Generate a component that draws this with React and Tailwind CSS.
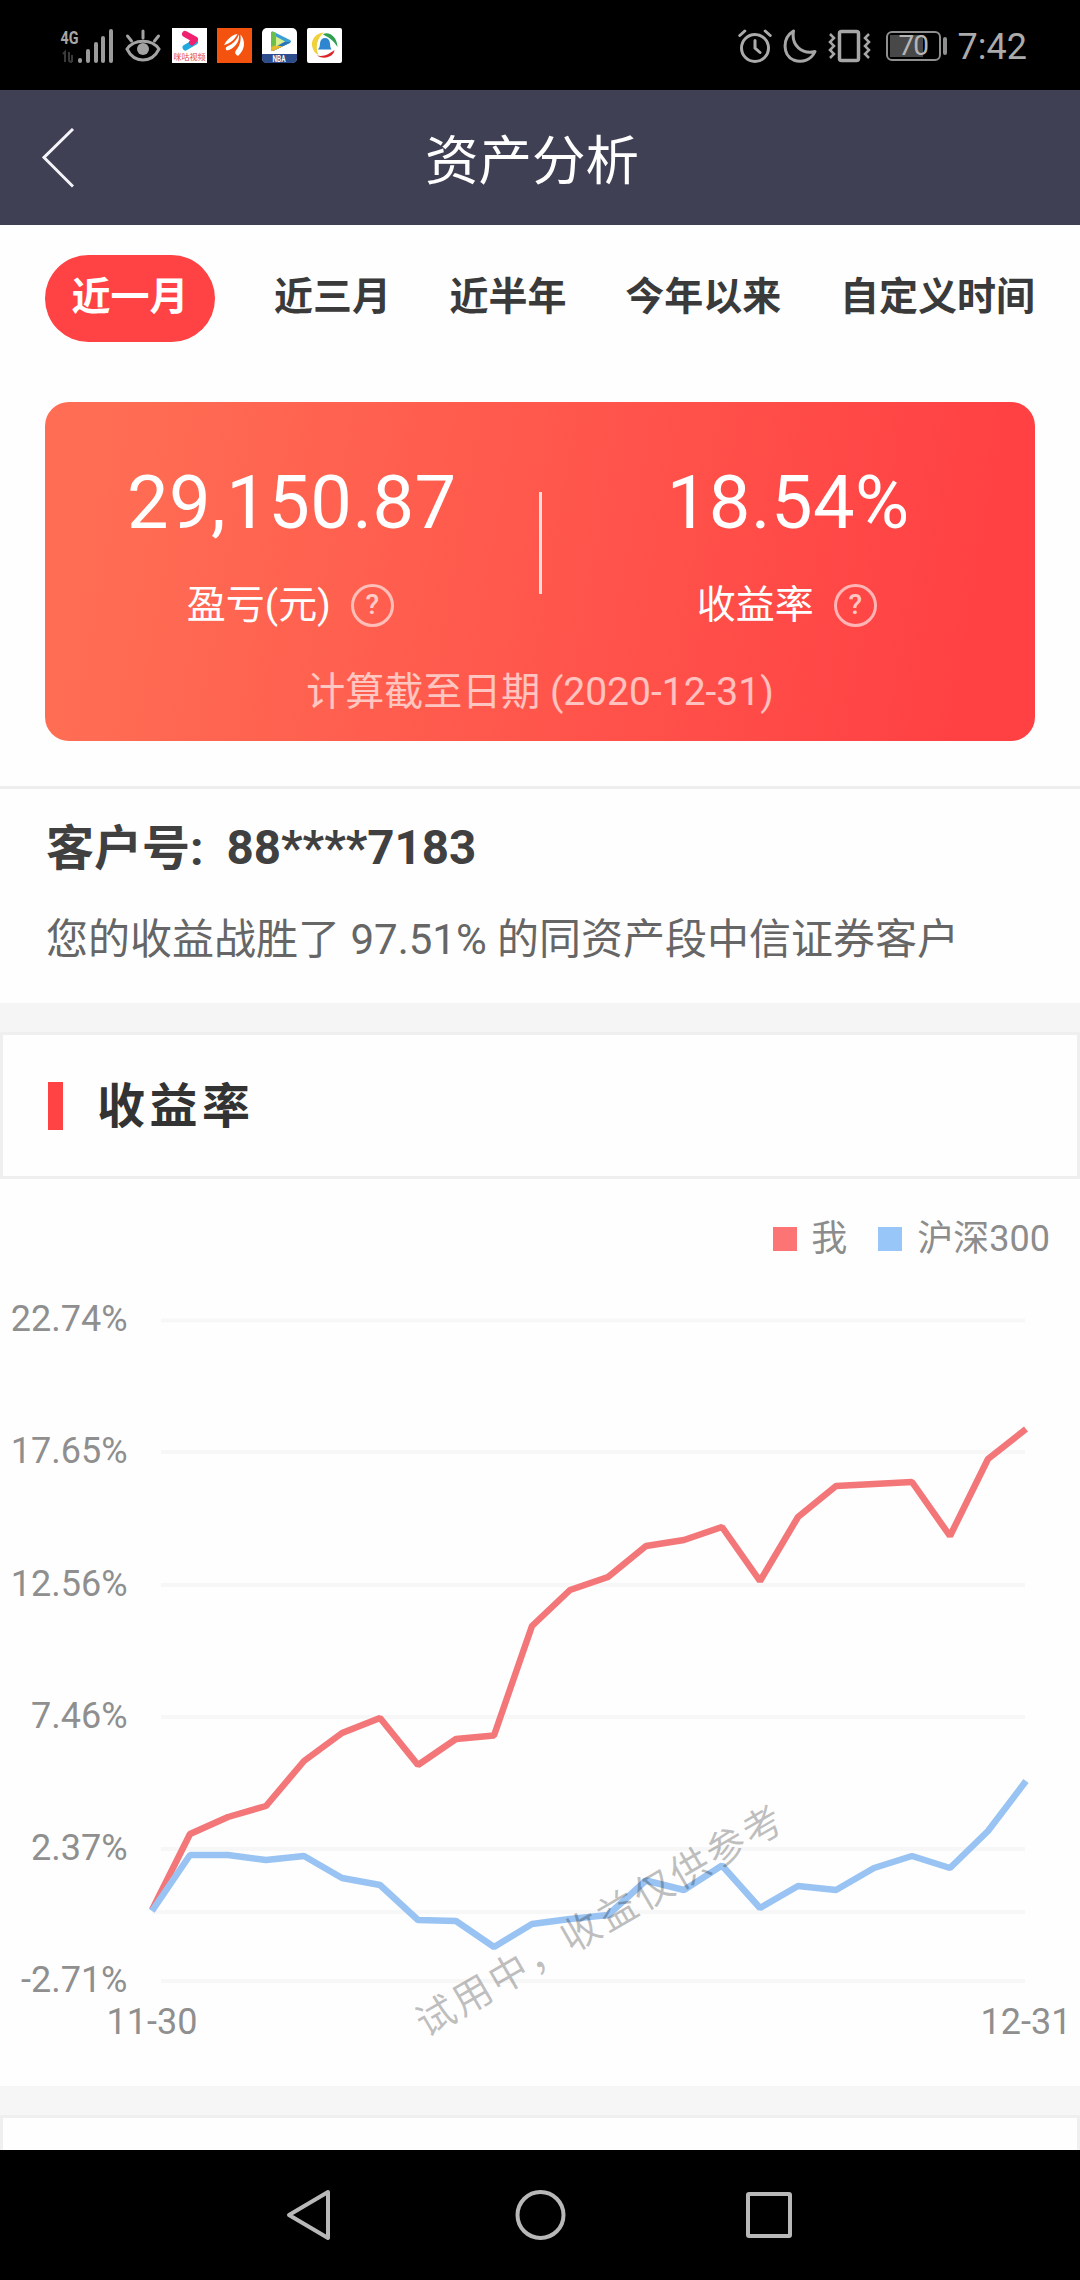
const TABS = ['近三月', '近半年', '今年以来', '自定义时间']

const Y_LABELS = ['22.74%', '17.65%', '12.56%', '7.46%', '2.37%', '-2.71%']

// y positions inside the plot, one per trading day
const MINE = [
  730, 654, 637, 626, 581, 553, 538, 585, 559, 555.5, 446, 410, 397, 366, 360, 347, 401, 337, 306, 304, 302, 356, 279,
  249,
]
const INDEX_300 = [
  731, 675, 675, 680, 676, 698, 705, 740, 741, 767, 744, 739, 735, 700.5, 710, 685.5, 728, 706, 710, 688, 676, 688, 651,
  601,
]
const GRID = [140.5, 272, 405, 537, 669, 801]

function toPoints(values) {
  return values.map((y, i) => `${152 + i * 38},${y}`).join(' ')
}

function SignalIcon() {
  return (
    <svg width="55" height="42" viewBox="0 -4 55 42" className="shrink-0">
      <text x="0.500" y="15" fontSize="19" fontWeight="700" fill="#a6a6a6" textLength="18" lengthAdjust="spacingAndGlyphs">
        4G
      </text>
      <path d="M3 25l2-2v10M9 23v8q0 2 3 2M12 26v7" fill="none" stroke="#3a3a3a" strokeWidth="2" />
      <g fill="#9b9b9b">
        <rect x="18" y="29" width="4" height="5" rx="2" />
        <rect x="26" y="20" width="4" height="14" rx="2" />
        <rect x="34" y="13" width="4" height="21" rx="2" />
        <rect x="41" y="7" width="4" height="27" rx="2" />
        <rect x="49" y="0" width="4" height="34" rx="2" />
      </g>
    </svg>
  )
}

function EyeIcon() {
  return (
    <svg width="36" height="34" viewBox="0 0 36 34" fill="none" stroke="#a3a3a3" strokeWidth="3" strokeLinecap="round">
      <path d="M2 20C9 9.500 27 9.500 34 20C27 34.500 9 34.500 2 20Z" />
      <circle cx="18" cy="20" r="6" fill="#a3a3a3" stroke="none" />
      <path d="M18 2v7M2.500 7l4 5M33.500 7l-4 5" />
    </svg>
  )
}

function VideoAppIcon() {
  return (
    <svg width="35" height="35" viewBox="0 0 35 35">
      <rect width="35" height="35" fill="#fff" />
      <path d="M23 14l-9.500 5.500" stroke="#1fa9dc" strokeWidth="6" strokeLinecap="round" />
      <path d="M13 6l10 5.500-3 3" fill="none" stroke="#f0206e" strokeWidth="6" strokeLinecap="round" strokeLinejoin="round" />
      <text x="1.500" y="31.500" fontSize="7.500" fill="#e2474a" textLength="32" lengthAdjust="spacingAndGlyphs">
        咪咕视频
      </text>
    </svg>
  )
}

function FeatherAppIcon() {
  return (
    <svg width="35" height="35" viewBox="0 0 35 35">
      <rect width="35" height="35" fill="#f4520f" />
      <g fill="#fff">
        <path d="M7 17C9 13 14 7 20.500 6C18 11 14 15 7 17Z" />
        <path d="M10 22.500C8 21 8.500 19 11 18C17 15.500 20 11 22 6.500C23 14 17 21 10 22.500Z" />
        <path d="M21 28C18 26 17 24.500 20 21C23.500 16.500 24 11 23.500 6.500C29 13 28 22 21 28Z" />
      </g>
    </svg>
  )
}

function PlayerAppIcon() {
  return (
    <svg width="35" height="35" viewBox="0 0 35 35">
      <rect width="35" height="35" rx="5" fill="#fff" />
      <path d="M0 26h35v4q0 5-5 5H5q-5 0-5-5z" fill="#2c4c8c" />
      <path d="M9 5.500q0-3 3-1.500l16 8q2 1.500 0 3L12 22.500q-3 1.500-3-2z" fill="#3a9fd6" />
      <path d="M9 14h19q0 .700-.500 1L12 22.500q-3 1.500-3-2z" fill="#2b72b8" />
      <path d="M9 7l4 2v8l8 1.500-9 4q-3 1.500-3-2z" fill="#e8b92c" />
      <path d="M9 5.500q0-3 3-1.500l2 1v12l-5 2z" fill="#6cc04a" />
      <path d="M14 8.500l9 5-9 5z" fill="#d8f08c" />
      <text x="10.500" y="33.500" fontSize="8.500" fontWeight="700" fill="#fff" textLength="13" lengthAdjust="spacingAndGlyphs">
        NBA
      </text>
    </svg>
  )
}

function RingAppIcon() {
  return (
    <svg width="35" height="35" viewBox="0 0 35 35">
      <rect width="35" height="35" rx="2" fill="#fff" />
      <path d="M17 4.500C8 5 2.500 13 6 21C7 24 9 26 11.500 27C8 19 10 10 17 4.500Z" fill="#f0d13a" />
      <path d="M16 6.500C20 3 30 7 30.500 19C26 11.500 21 9 16 6.500Z" fill="#2fa050" />
      <path d="M10 27.500C17 29 22 26 27.500 22C27 28 18 32.500 10 27.500Z" fill="#d9252a" />
      <path d="M11 21.500q2-2 2-6q.500-5.500 5-5.500t5 5.500q0 4 1.500 6z" fill="#2f86d0" />
    </svg>
  )
}

function AlarmIcon() {
  return (
    <svg width="34" height="34" viewBox="0 0 34 34" fill="none" stroke="#ababab" strokeWidth="3" strokeLinecap="round">
      <circle cx="17" cy="19" r="13.500" />
      <path d="M17 11.500v7.500l5 4.500M1.800 6.500l5-4.500M32.200 6.500l-5-4.500" />
    </svg>
  )
}

function MoonIcon() {
  return (
    <svg width="34" height="34" viewBox="0 0 34 34" fill="none" stroke="#a6a6a6" strokeWidth="3" strokeLinejoin="round">
      <path d="M10.500 2C-1 9 -.500 26 10.500 31C19.500 34.500 28.500 30.500 32 22.500C19 25.500 8 16.500 10.500 2Z" />
    </svg>
  )
}

function VibrateIcon() {
  return (
    <svg width="43" height="34" viewBox="0 0 43 34" fill="none" stroke="#a6a6a6" strokeWidth="3">
      <rect x="11.500" y="2.500" width="19" height="29" rx="2" strokeWidth="3.500" />
      <path d="M2 5l4 4-4 4 4 4-4 4 4 4-4 4M41 5l-4 4 4 4-4 4 4 4-4 4 4 4" strokeWidth="2.500" />
    </svg>
  )
}

function StatusBar() {
  return (
    <div className="flex h-[90px] items-center justify-between bg-black pt-[1px] pr-[53px] pl-[60px]">
      <div className="flex items-center gap-[10px]">
        <SignalIcon />
        <EyeIcon />
        <div className="ml-px flex gap-[10px]">
          <VideoAppIcon />
          <FeatherAppIcon />
          <PlayerAppIcon />
          <RingAppIcon />
        </div>
      </div>
      <div className="flex items-center">
        <AlarmIcon />
        <div className="ml-[11px] flex">
          <MoonIcon />
        </div>
        <div className="ml-[11px] flex">
          <VibrateIcon />
        </div>
        <div className="ml-[15px] flex h-[30px] w-[55px] items-center rounded-[6px] border-2 border-[#8f8f8f] p-[2px]">
          <div className="flex h-full w-[33px] items-center bg-[#484848] pl-[9px] text-[28px] leading-none tracking-[-1px] text-[#b5b5b5]">
            70
          </div>
        </div>
        <div className="ml-[2px] h-[18px] w-[4px] rounded-sm bg-[#8f8f8f]" />
        <div className="ml-[11px] pt-[2px] text-[36px] leading-none text-[#ababab]">7:42</div>
      </div>
    </div>
  )
}

function Header() {
  return (
    <div className="flex h-[135px] items-center bg-[#404055] pl-[42px] text-white">
      <svg width="32" height="60" viewBox="0 0 32 60" fill="none" stroke="#f4f4fa" strokeWidth="3">
        <path d="M31 1L2 29.500L31 58.500" />
      </svg>
      <h1 className="flex-1 pt-[9px] pr-[90px] text-center text-[53.500px] font-normal">资产分析</h1>
    </div>
  )
}

function Tabs() {
  return (
    <div className="flex h-[87px] items-center gap-[58.700px] text-[39px] font-bold whitespace-nowrap text-[#3a3a3a]">
      <div className="flex h-[87px] w-[172.500px] items-center justify-center rounded-full bg-[#ff4244] pb-[2px] text-white">
        近一月
      </div>
      {TABS.map((tab) => (
        <div key={tab} className="pb-[2px]">
          {tab}
        </div>
      ))}
    </div>
  )
}

function Help() {
  return (
    <span className="flex size-[43px] items-center justify-center rounded-full border-[3px] border-white/60 text-[28px] leading-none font-medium text-white/70">
      ?
    </span>
  )
}

function Metric({ value, label }) {
  return (
    <div className="flex flex-1 flex-col items-center">
      <div className="h-[88px] text-[74px] leading-[88px] tracking-[0.500px]">{value}</div>
      <div className="mt-[29px] mr-[3px] flex h-[58px] items-center gap-[20px] text-[39px]">
        {label}
        <Help />
      </div>
    </div>
  )
}

function SummaryCard() {
  return (
    <div className="mt-[60px] h-[339px] rounded-[24px] bg-[linear-gradient(100deg,#ff6e54_5%,#ff4144_92%)] pt-[57px] text-white">
      <div className="flex">
        <Metric value="29,150.87" label="盈亏(元)" />
        <div className="mt-[33px] h-[102px] w-[3px] bg-white/80" />
        <Metric value="18.54%" label="收益率" />
      </div>
      <div className="mt-[29px] text-center text-[39px] leading-[58px] text-white/65">计算截至日期 (2020-12-31)</div>
    </div>
  )
}

function Legend() {
  return (
    <div className="flex h-[60px] items-center justify-end pt-[1px] pr-[30px] text-[36px] text-[#8c8c8c]">
      <span className="mr-[14px] size-[24px] bg-[#fd7474]" />
      我
      <span className="mr-[15px] ml-[31px] size-[24px] bg-[#98c6f8]" />
      沪深300
    </div>
  )
}

function Chart() {
  return (
    <svg width="1080" height="907" viewBox="0 0 1080 907" className="block">
      <g stroke="#f7f7f7" strokeWidth="4">
        {GRID.map((y) => (
          <line key={y} x1="161" x2="1025" y1={y} y2={y} />
        ))}
        <line x1="152" x2="1025" y1="732" y2="732" />
      </g>
      <g fill="none" strokeWidth="6.500" strokeLinejoin="bevel">
        <polyline points={toPoints(MINE)} stroke="#f37679" />
        <polyline points={toPoints(INDEX_300)} stroke="#98c3f2" />
      </g>
      <g fontSize="36" fill="#8f8f8f">
        {Y_LABELS.map((label, i) => (
          <text key={label} x="127.500" y={GRID[i] + 10.500} textAnchor="end">
            {label}
          </text>
        ))}
        <text x="152" y="854" textAnchor="middle">
          11-30
        </text>
        <text x="1026" y="854" textAnchor="middle">
          12-31
        </text>
      </g>
      <text
        transform="translate(599 740) rotate(-30.200)"
        x="1"
        y="15"
        fontSize="39"
        letterSpacing="3"
        textAnchor="middle"
        fill="#000"
        fillOpacity="0.25"
      >
        试用中，收益仅供参考
      </text>
    </svg>
  )
}

function NavBar() {
  return (
    <div className="flex h-[130px] items-center justify-between bg-black pr-[287px] pl-[286px]">
      <svg width="48" height="52" viewBox="0 0 48 52" fill="none" stroke="#b8b8b8" strokeWidth="4" strokeLinejoin="round">
        <path d="M42 3L3 26L42 49Z" />
      </svg>
      <svg width="52" height="52" viewBox="0 0 52 52" fill="none" stroke="#b8b8b8" strokeWidth="4">
        <circle cx="26.500" cy="26" r="23" />
      </svg>
      <svg width="48" height="48" viewBox="0 0 48 48" fill="none" stroke="#b8b8b8" strokeWidth="4" strokeLinejoin="round">
        <rect x="3" y="3" width="42" height="42" rx="1" />
      </svg>
    </div>
  )
}

export default function App() {
  return (
    <div className="flex h-[2280px] w-[1080px] flex-col overflow-hidden bg-[#fefefe] font-[Roboto,'Noto_Sans_CJK_SC',sans-serif]">
      <StatusBar />
      <Header />

      <div className="h-[561px] px-[45px] pt-[30px]">
        <Tabs />
        <SummaryCard />
      </div>

      <div className="h-[217px] border-t-3 border-[#eeeeee] pl-[46px]">
        <div className="mt-[24px] flex h-[72px] items-center text-[48px] font-bold whitespace-pre text-[#404040]">
          客户号:<span className="ml-[23px] text-[47.500px]">88****7183</span>
        </div>
        <div className="mt-[25px] text-[42px] leading-[60px] text-[#666666]">
          您的收益战胜了 97.51% 的同资产段中信证券客户
        </div>
      </div>

      <div className="h-[29px] bg-[#f5f5f5]" />
      <div className="flex h-[147px] items-center border-3 border-[#efefef] pl-[45px]">
        <div className="mt-[1px] h-[48px] w-[15px] bg-[#ff4244]" />
        <h2 className="mt-[3px] ml-[34px] text-[48px] font-bold tracking-[4.500px] text-[#333333]">收益率</h2>
      </div>

      <div className="h-[907px]">
        <div className="h-[60px] pt-[29px]">
          <Legend />
        </div>
        <div className="-mt-[59px]">
          <Chart />
        </div>
      </div>
      <div className="h-[29px] bg-[#f6f6f6]" />
      <div className="h-[35px] border-x-3 border-t-3 border-[#efefef]" />

      <NavBar />
    </div>
  )
}
